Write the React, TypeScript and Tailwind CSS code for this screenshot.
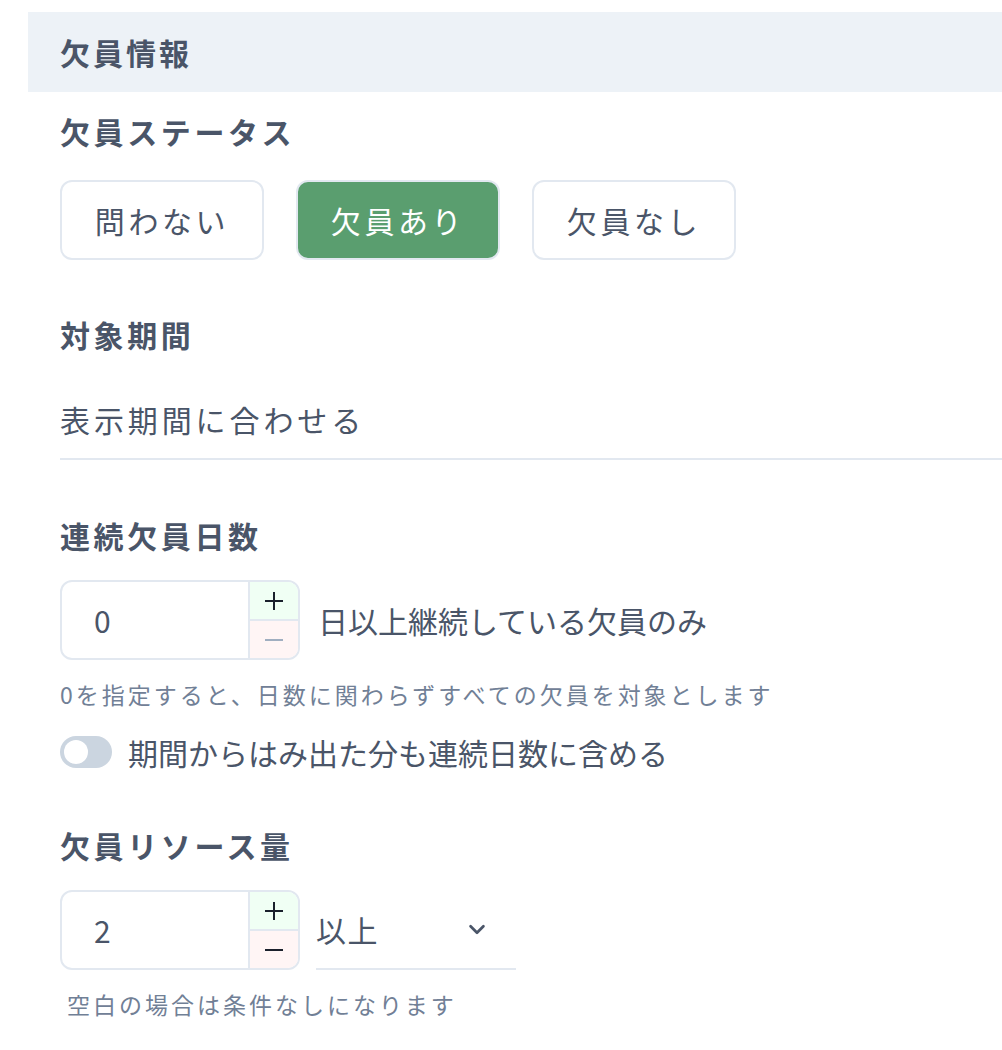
import React from "react";

const font = { fontFamily: '"Noto Sans CJK JP", "Noto Sans", sans-serif' };

function Label({ children, className = "" }: { children: React.ReactNode; className?: string }) {
  return (
    <div className={`h-[42px] leading-[42px] text-[30px] font-bold text-[#4a5568] tracking-[0.12em] ${className}`}>
      {children}
    </div>
  );
}

function NumberInput({ value, minusDisabled }: { value: string; minusDisabled?: boolean }) {
  return (
    <div className="w-[240px] h-[80px] rounded-[12px] border-2 border-[#e2e8f0] flex overflow-hidden">
      <div className="flex-1 flex items-center pl-[32px] text-[30px] text-[#4a5568]">{value}</div>
      <div className="w-[50px] flex flex-col border-l-2 border-[#e2e8f0]">
        <div className="flex-1 bg-[#f0fff4] flex items-center justify-center border-b-2 border-[#e2e8f0]">
          <svg width="20" height="20" viewBox="0 0 20 20">
            <path d="M10 1v18M1 10h18" stroke="#1a202c" strokeWidth="2" />
          </svg>
        </div>
        <div className="flex-1 bg-[#fff5f5] flex items-center justify-center">
          <svg width="20" height="20" viewBox="0 0 20 20">
            <path d="M1 10h18" stroke={minusDisabled ? "#a0aec0" : "#1a202c"} strokeWidth="2" />
          </svg>
        </div>
      </div>
    </div>
  );
}

function Choice({ children, active }: { children: React.ReactNode; active?: boolean }) {
  return (
    <div
      className={`w-[204px] h-[80px] rounded-[12px] border-2 flex items-center justify-center text-[30px] tracking-[0.12em] ${
        active ? "bg-[#5a9e6f] border-[#e2e8f0] text-white" : "bg-white border-[#e2e8f0] text-[#4a5568]"
      }`}
    >
      {children}
    </div>
  );
}

export default function App() {
  return (
    <div className="bg-white w-[1002px] h-[1050px] pt-[12px] pl-[28px] overflow-hidden" style={font}>
      <div className="h-[80px] bg-[#edf2f7] pl-[32px] flex items-center text-[30px] font-bold text-[#4a5568] tracking-[0.1em]">
        欠員情報
      </div>
      <div className="pl-[32px]">
        <Label className="mt-[18px]">欠員ステータス</Label>
        <div className="mt-[28px] flex gap-[32px]">
          <Choice>問わない</Choice>
          <Choice active>欠員あり</Choice>
          <Choice>欠員なし</Choice>
        </div>

        <Label className="mt-[53px]">対象期間</Label>
        <div className="mt-[25px] h-[80px] border-b-2 border-[#e2e8f0] flex items-center text-[30px] text-[#4a5568] tracking-[0.13em]">
          表示期間に合わせる
        </div>

        <Label className="mt-[54px]">連続欠員日数</Label>
        <div className="mt-[24px] flex items-center gap-[18px]">
          <NumberInput value="0" minusDisabled />
          <span className="text-[30px] text-[#4a5568] tracking-[0em]">日以上継続している欠員のみ</span>
        </div>
        <div className="mt-[18px] h-[32px] leading-[32px] text-[23px] text-[#718096] tracking-[0.13em]">
          0を指定すると、日数に関わらずすべての欠員を対象とします
        </div>
        <div className="mt-[22px] h-[40px] flex items-center gap-[16px]">
          <div className="w-[52px] h-[32px] rounded-full bg-[#cbd5e0] p-[4px] flex items-center">
            <div className="w-[24px] h-[24px] rounded-full bg-white" />
          </div>
          <span className="text-[30px] text-[#4a5568] tracking-[0em]">期間からはみ出た分も連続日数に含める</span>
        </div>

        <Label className="mt-[52px]">欠員リソース量</Label>
        <div className="mt-[24px] flex items-center gap-[16px]">
          <NumberInput value="2" />
          <div className="w-[200px] h-[80px] border-b-2 border-[#e2e8f0] flex items-center justify-between pr-[28px] text-[30px] text-[#4a5568] tracking-[0.05em]">
            <span>以上</span>
            <svg width="22" height="22" viewBox="0 0 24 24" fill="none">
              <path d="M5 9l7 7 7-7" stroke="#4a5568" strokeWidth="3" strokeLinecap="round" strokeLinejoin="round" />
            </svg>
          </div>
        </div>
        <div className="mt-[18px] ml-[7px] h-[32px] leading-[32px] text-[23px] text-[#718096] tracking-[0.13em]">
          空白の場合は条件なしになります
        </div>
      </div>
    </div>
  );
}
